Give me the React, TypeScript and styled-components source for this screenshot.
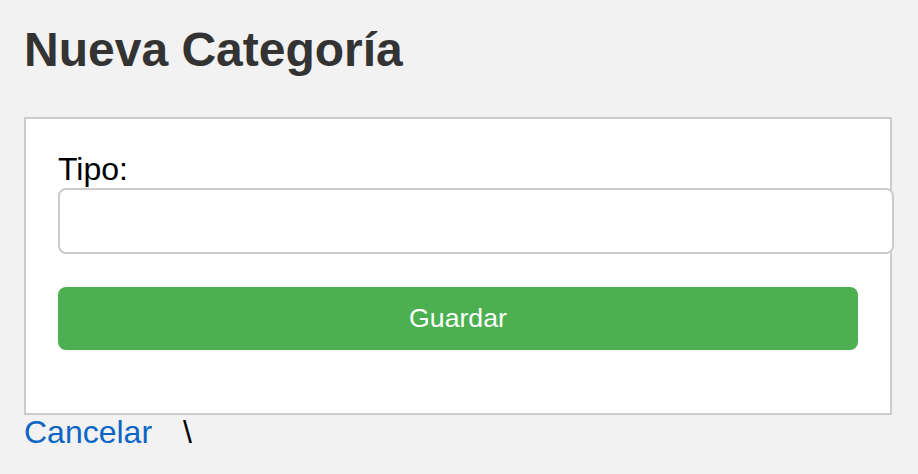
import React from "react";
import styled, { createGlobalStyle } from "styled-components";

const GlobalStyle = createGlobalStyle`
  html, body {
    margin: 0;
    padding: 0;
    background: #f2f2f2;
    font-family: "Liberation Sans", Arial, sans-serif;
  }
`;

const Page = styled.div`
  padding: 22px 26px 0 24px;
  background: #f2f2f2;
  min-height: 452px;
`;

const Title = styled.h1`
  margin: 0 0 40px 0;
  font-size: 48px;
  font-weight: bold;
  color: #333;
  line-height: 55px;
`;

const Card = styled.div`
  background: #fff;
  border: 2px solid #ccc;
  padding: 32px 32px 32px 32px;
`;

const Form = styled.form`
  margin: 0;
  display: block;
`;

const Label = styled.label`
  display: block;
  font-size: 32px;
  line-height: 37px;
  color: #000;
`;

const Input = styled.input`
  display: block;
  box-sizing: content-box;
  width: 100%;
  height: 30px;
  padding: 16px;
  margin: 0;
  border: 2px solid #ccc;
  border-radius: 8px;
  background: #fff;
  font-family: inherit;
  font-size: 26px;
  outline: none;
`;

const Button = styled.button`
  display: block;
  width: 100%;
  height: 63px;
  margin: 33px 0 31px 0;
  border: none;
  border-radius: 8px;
  background: #4caf50;
  color: #fff;
  font-family: "Liberation Sans", Arial, sans-serif;
  font-size: 26.67px;
  cursor: pointer;
`;

const Footer = styled.div`
  display: flex;
  align-items: baseline;
  font-size: 32px;
  line-height: 37px;
  margin-top: -1px;
`;

const Link = styled.a`
  color: #0b66c3;
  text-decoration: none;
`;

const Slash = styled.span`
  margin-left: 31px;
  color: #000;
`;

export default function App() {
  return (
    <>
      <GlobalStyle />
      <Page>
        <Title>Nueva Categoría</Title>
        <Card>
          <Form onSubmit={(e) => e.preventDefault()}>
            <Label htmlFor="tipo">Tipo:</Label>
            <Input id="tipo" type="text" />
            <Button type="submit">Guardar</Button>
          </Form>
        </Card>
        <Footer>
          <Link href="#">Cancelar</Link>
          <Slash>\</Slash>
        </Footer>
      </Page>
    </>
  );
}
